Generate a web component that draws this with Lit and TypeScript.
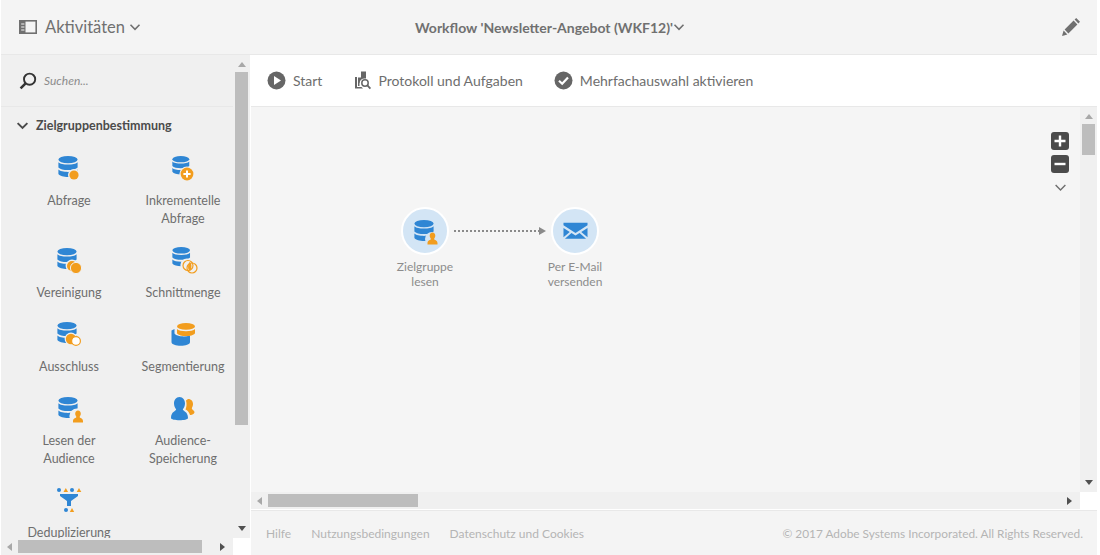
import { LitElement, html, css, svg } from "lit";
import { customElement } from "lit/decorators.js";

const BLUE = "#2f86d4";
const ORANGE = "#f29d1e";

// database cylinder, drawn at 20 wide and 21 high before scaling
const db = (x: number, y: number, s = 1, color = BLUE) => svg`
  <g transform="translate(${x} ${y}) scale(${s})" fill=${color}>
    <ellipse cx="10" cy="3.6" rx="9.6" ry="3.6" />
    <path d="M.4 6.2C3 9.4 17 9.4 19.6 6.2V11.4C17 14.8 3 14.8 .4 11.4Z" />
    <path d="M.4 13.6C3 16.8 17 16.8 19.6 13.6V18C17 22 3 22 .4 18Z" />
  </g>`;

const person = (x: number, y: number, s = 1, color = ORANGE) => svg`
  <g transform="translate(${x} ${y}) scale(${s})" fill=${color}>
    <path d="M5 0C6.8 0 7.8 1.4 7.8 3.2C7.8 4.6 7 5.6 6.6 6.4C6.6 7.4 10 7.4 10 10.5V12H0V10.5C0 7.4 3.4 7.4 3.4 6.4C3 5.6 2.2 4.6 2.2 3.2C2.2 1.4 3.2 0 5 0Z" />
  </g>`;

const icons: Record<string, unknown> = {
  query: svg`${db(7, 6)}
    <circle cx="23" cy="25" r="6" fill="#f0f0f0" /><circle cx="23" cy="25" r="4.6" fill=${ORANGE} />`,
  incremental: svg`${db(7, 6, 0.88)}
    <circle cx="22" cy="24" r="7.6" fill="#f0f0f0" /><circle cx="22" cy="24" r="6.4" fill=${ORANGE} />
    <path d="M22 20.4V27.6M18.4 24H25.6" stroke="#fff" stroke-width="2" />`,
  union: svg`${db(6, 6)}
    <circle cx="21" cy="24" r="6.4" fill="#f0f0f0" /><circle cx="21" cy="24" r="5" fill=${ORANGE} />
    <circle cx="25" cy="26" r="5.6" fill=${ORANGE} stroke="#f0f0f0" stroke-width="1" />`,
  intersect: svg`${db(7, 5, 0.92)}
    <circle cx="22" cy="23" r="6.6" fill="#f0f0f0" />
    <circle cx="23" cy="23.5" r="5" fill="none" stroke=${ORANGE} stroke-width="1.2" />
    <circle cx="27" cy="26" r="5" fill="none" stroke=${ORANGE} stroke-width="1.2" />
    <path d="M24.5 20C27 21 27 26 25 28.8C22.5 28 22.5 23 24.5 20Z" fill=${ORANGE} />`,
  exclude: svg`${db(6, 6)}
    <circle cx="20" cy="23" r="6.4" fill="#f0f0f0" /><circle cx="20" cy="23" r="5.2" fill=${ORANGE} />
    <circle cx="25" cy="25" r="4.4" fill="#fff" stroke=${ORANGE} stroke-width="1.2" />`,
  segment: svg`
    <path d="M6.5 14.5L9.5 13V17.5C11 20 19 21.5 25 19.5V26C25 31 6.5 31 6.5 26Z" fill=${BLUE} />
    <ellipse cx="21" cy="10.4" rx="9" ry="3.4" fill=${ORANGE} />
    <path d="M12 13C14.5 16 27.5 16 30 13V17.2C27.5 21 14.5 21 12 17.2Z" fill=${ORANGE} />`,
  read: svg`${db(7, 7)}
    <circle cx="26" cy="26" r="7.6" fill="#f0f0f0" />
    ${person(22, 20.5)}`,
  save: svg`
    <path d="M23 9C26.5 9 28 11.5 28 14C28 17 26.5 17.5 27 19C27.6 20 29.6 20.5 29.5 22.5C29 24.5 26 25 25 25C24 22 22.5 20.5 20.5 19.5C21.5 17 22 14 21 10.5Z" fill=${ORANGE} />
    <path d="M14.5 7C18 7 20 10 20 13.5C20 16 18.8 18 17.8 19.5C18 21 23 21.5 23 28C23 31 6 31 6 28C6 21.5 11 21 11.2 19.5C10.2 18 9 16 9 13.5C9 10 11 7 14.5 7Z" fill=${BLUE} />`,
  dedupe: svg`
    <circle cx="8" cy="8" r="2" fill=${BLUE} /><path d="M12.5 10L14.8 6L17.1 10Z" fill=${ORANGE} />
    <circle cx="21" cy="8" r="2" fill=${BLUE} /><path d="M25.7 10L28 6L30.3 10Z" fill=${ORANGE} />
    <path d="M9 12H27V14L20 19V24H16V19L9 14Z" fill=${BLUE} />
    <circle cx="15" cy="28" r="2" fill=${BLUE} /><path d="M18.8 30L21 26L23.2 30Z" fill=${ORANGE} />`,
};

const palette = [
  { icon: "query", label: ["Abfrage"] },
  { icon: "incremental", label: ["Inkrementelle", "Abfrage"] },
  { icon: "union", label: ["Vereinigung"] },
  { icon: "intersect", label: ["Schnittmenge"] },
  { icon: "exclude", label: ["Ausschluss"] },
  { icon: "segment", label: ["Segmentierung"] },
  { icon: "read", label: ["Lesen der", "Audience"] },
  { icon: "save", label: ["Audience-", "Speicherung"] },
  { icon: "dedupe", label: ["Deduplizierung"] },
];

const chevron = (size: number, color: string, sw = 1.6) => html`
  <svg width=${size} height=${size} viewBox="0 0 12 12">
    <path d="M1.5 3.8L6 8.3L10.5 3.8" fill="none" stroke=${color} stroke-width=${sw} />
  </svg>`;

@customElement("app-root")
export class AppRoot extends LitElement {
  static styles = css`
    :host {
      display: block;
      width: 1100px;
      height: 555px;
      background: #fff;
      font-family: Lato, "Open Sans", sans-serif;
      color: #6e6e6e;
    }

    .shell {
      width: 1096px;
      height: 555px;
      margin-left: 1px;
      display: flex;
      flex-direction: column;
    }

    .header {
      height: 54px;
      flex: none;
      background: #f4f4f4;
      border-bottom: 1px solid #e8e8e8;
      display: flex;
      align-items: center;
    }

    .panel-toggle {
      display: flex;
      align-items: center;
      width: 396px;
      padding-left: 18px;
      box-sizing: border-box;
      gap: 8px;
      font-size: 16.5px;
      color: #707070;
    }

    .panel-toggle svg:last-child {
      margin-left: -4px;
    }

    .title {
      flex: 1;
      display: flex;
      align-items: center;
      margin-left: 18px;
      font-size: 14px;
      font-weight: 700;
      color: #707070;
    }

    .edit {
      margin-right: 16px;
      display: flex;
    }

    .body {
      flex: 1;
      min-height: 0;
      display: flex;
    }

    .sidebar {
      width: 249px;
      flex: none;
      background: #f0f0f0;
      display: grid;
      grid-template-columns: 232px 17px;
      grid-template-rows: 1fr 17px;
      margin-right: 1px;
    }

    .side-content {
      overflow: hidden;
      min-height: 0;
    }

    .search {
      height: 51px;
      border-bottom: 1px solid #e8e8e8;
      display: flex;
      align-items: center;
      padding-left: 18px;
      gap: 7px;
      font-size: 12px;
      font-style: italic;
      color: #8c8c8c;
    }

    .section {
      display: flex;
      align-items: center;
      height: 37px;
      padding-left: 15px;
      gap: 7px;
      font-size: 12.5px;
      font-weight: 700;
      color: #4b4b4b;
    }

    .grid {
      display: grid;
      grid-template-columns: 114px 114px;
      padding-left: 11px;
      margin-top: 6px;
      row-gap: 14px;
    }

    .item {
      display: flex;
      flex-direction: column;
      align-items: center;
      font-size: 12.5px;
      line-height: 18px;
      color: #6e6e6e;
      white-space: nowrap;
    }

    .item svg {
      margin-bottom: 6px;
    }

    .vbar,
    .hbar {
      background: #f0f0f0;
      display: flex;
      align-items: center;
    }

    .vbar {
      flex-direction: column;
      padding: 0 2px;
      box-sizing: border-box;
    }

    .hbar {
      padding: 2px 0;
      box-sizing: border-box;
    }

    .thumb {
      background: #bdbdbd;
      flex: none;
    }

    .vbar .thumb {
      width: 13px;
    }

    .hbar .thumb {
      height: 13px;
    }

    .spacer {
      flex: 1;
    }

    .arrow {
      flex: none;
      width: 0;
      height: 0;
      border: 4px solid transparent;
    }

    .up {
      border-top: 0;
      border-bottom: 5px solid #a8a8a8;
      margin: 7px 0 5px;
    }

    .down {
      border-bottom: 0;
      border-top: 5px solid #505050;
      margin: 0 0 7px;
    }

    .left {
      border-left: 0;
      border-right: 5px solid #a8a8a8;
      margin: 0 6px;
    }

    .right {
      border-right: 0;
      border-left: 5px solid #505050;
      margin: 0 8px 0 0;
    }

    .corner {
      background: #fff;
    }

    .main {
      flex: 1;
      min-width: 0;
      display: flex;
      flex-direction: column;
    }

    .toolbar {
      height: 51px;
      flex: none;
      background: #fff;
      border-bottom: 1px solid #e8e8e8;
      display: flex;
      align-items: center;
      padding-left: 16px;
      font-size: 14px;
      color: #6e6e6e;
    }

    .tool {
      display: flex;
      align-items: center;
      gap: 7px;
      margin-right: 31px;
    }

    .tool.log {
      gap: 6px;
    }

    .workspace {
      flex: 1;
      min-height: 0;
      display: grid;
      grid-template-columns: 1fr 17px;
      grid-template-rows: 1fr 17px;
    }

    .canvas {
      position: relative;
      background: #f5f5f5;
      overflow: hidden;
    }

    .node {
      position: absolute;
      top: 100px;
      width: 80px;
      display: flex;
      flex-direction: column;
      align-items: center;
      font-size: 12px;
      line-height: 15px;
      color: #8c8c8c;
      text-align: center;
    }

    .bubble {
      width: 44px;
      height: 44px;
      border: 2px solid #fff;
      border-radius: 50%;
      background: #d3e5f5;
      display: flex;
      align-items: center;
      justify-content: center;
      margin-bottom: 4px;
    }

    .link {
      position: absolute;
      left: 203px;
      top: 119px;
    }

    .zoom {
      position: absolute;
      left: 800px;
      top: 25px;
      display: flex;
      flex-direction: column;
      align-items: center;
      gap: 5px;
    }

    .zoom-btn {
      width: 18px;
      height: 18px;
      border-radius: 3px;
      background: #4b4b4b;
      display: flex;
    }

    .zoom .chev {
      margin-top: 3px;
      display: flex;
    }

    .footer {
      height: 45px;
      flex: none;
      margin-top: 1px;
      box-sizing: border-box;
      background: #f4f4f4;
      border-top: 1px solid #e8e8e8;
      display: flex;
      align-items: center;
      padding: 0 14px 0 15px;
      gap: 20px;
      font-size: 12px;
      color: #b4b4b4;
    }

    .copy {
      margin-left: auto;
      font-size: 11.85px;
    }
  `;

  renderItem(item: { icon: string; label: string[] }) {
    return html`
      <div class="item">
        <svg width="36" height="36" viewBox="0 0 36 36">${icons[item.icon]}</svg>
        ${item.label.map((line) => html`<span>${line}</span>`)}
      </div>
    `;
  }

  render() {
    return html`
      <div class="shell">
        <div class="header">
          <div class="panel-toggle">
            <svg width="18" height="14" viewBox="0 0 18 14">
              <rect x=".8" y=".8" width="16.4" height="12.4" fill="none" stroke="#707070" stroke-width="1.6" />
              <rect x="1" y="1" width="5.5" height="12" fill="#707070" />
              <path d="M2.2 4H5.4M2.2 7H5.4M2.2 10H5.4" stroke="#f4f4f4" stroke-width="1" />
            </svg>
            <span>Aktivitäten</span>
            ${chevron(12, "#707070")}
          </div>
          <div class="title">
            <span>Workflow 'Newsletter-Angebot (WKF12)'</span>
            ${chevron(12, "#707070")}
          </div>
          <div class="edit">
            <svg width="20" height="20" viewBox="0 0 20 20">
              <path d="M1 19L2.6 13.6L6.4 17.4Z M3.6 12.6L12.6 3.6L16.4 7.4L7.4 16.4Z M13.6 2.6L15.2 1L19 4.8L17.4 6.4Z" fill="#707070" />
            </svg>
          </div>
        </div>

        <div class="body">
          <div class="sidebar">
            <div class="side-content">
              <div class="search">
                <svg width="18" height="18" viewBox="0 0 18 18">
                  <circle cx="10.6" cy="7.2" r="5.6" fill="none" stroke="#333" stroke-width="1.9" />
                  <path d="M6.6 11.4L1.6 16.4" stroke="#333" stroke-width="2.6" />
                </svg>
                <span>Suchen...</span>
              </div>
              <div class="section">
                ${chevron(13, "#4b4b4b", 1.8)}
                <span>Zielgruppenbestimmung</span>
              </div>
              <div class="grid">${palette.map((item) => this.renderItem(item))}</div>
            </div>
            <div class="vbar">
              <div class="arrow up"></div>
              <div class="thumb" style="height: 353px"></div>
              <div class="spacer"></div>
              <div class="arrow down"></div>
            </div>
            <div class="hbar">
              <div class="arrow left"></div>
              <div class="thumb" style="width: 184px"></div>
              <div class="spacer"></div>
              <div class="arrow right"></div>
            </div>
            <div class="corner"></div>
          </div>

          <div class="main">
            <div class="toolbar">
              <div class="tool">
                <svg width="19" height="19" viewBox="0 0 19 19">
                  <circle cx="9.5" cy="9.5" r="9" fill="#666" />
                  <path d="M7 5L14 9.5L7 14Z" fill="#fff" />
                </svg>
                <span>Start</span>
              </div>
              <div class="tool log">
                <svg width="19" height="19" viewBox="0 0 19 19">
                  <path d="M8 .5H13V7.5C9 7 6.8 9 6.5 12H5V6.5H8ZM2 6H4V16H8.5L10 17.5H2Z" fill="#666" />
                  <path d="M5 9H6.5V15H5Z" fill="#666" />
                  <circle cx="12" cy="12" r="3.2" fill="none" stroke="#666" stroke-width="1.5" />
                  <path d="M14.4 14.4L17.4 17.6" stroke="#666" stroke-width="1.8" />
                </svg>
                <span>Protokoll und Aufgaben</span>
              </div>
              <div class="tool">
                <svg width="19" height="19" viewBox="0 0 19 19">
                  <circle cx="9.5" cy="9.5" r="9" fill="#666" />
                  <path d="M5 9.8L8.2 12.8L14 6.6" fill="none" stroke="#fff" stroke-width="2.2" />
                </svg>
                <span>Mehrfachauswahl aktivieren</span>
              </div>
            </div>

            <div class="workspace">
              <div class="canvas">
                <svg class="link" width="100" height="12" viewBox="0 0 100 12">
                  <path d="M0 5H85" stroke="#8a8a8a" stroke-width="2" stroke-dasharray="2 2" />
                  <path d="M85 1L92 5L85 9Z" fill="#8a8a8a" />
                </svg>
                <div class="node" style="left: 134px">
                  <div class="bubble">
                    <svg width="28" height="28" viewBox="0 0 28 28">
                      ${db(3, 3)}
                      <circle cx="21" cy="22" r="7" fill="#d3e5f5" />
                      ${person(16.5, 15.5)}
                    </svg>
                  </div>
                  <span>Zielgruppe<br />lesen</span>
                </div>
                <div class="node" style="left: 284px">
                  <div class="bubble">
                    <svg width="25" height="18" viewBox="0 0 26 18">
                      <path d="M.5 .5H25.5V3L13 11L.5 3Z M.5 6L7 10L.5 15.5Z M25.5 6L19 10L25.5 15.5Z M2 17L8.8 11.2L13 13.8L17.2 11.2L24 17Z" fill=${BLUE} />
                    </svg>
                  </div>
                  <span>Per E-Mail<br />versenden</span>
                </div>
                <div class="zoom">
                  <div class="zoom-btn">
                    <svg width="18" height="18" viewBox="0 0 18 18">
                      <path d="M9 3.5V14.5M3.5 9H14.5" stroke="#fff" stroke-width="2.4" />
                    </svg>
                  </div>
                  <div class="zoom-btn">
                    <svg width="18" height="18" viewBox="0 0 18 18">
                      <path d="M3.5 9H14.5" stroke="#fff" stroke-width="2.4" />
                    </svg>
                  </div>
                  <div class="chev">${chevron(13, "#6e6e6e", 1.3)}</div>
                </div>
              </div>
              <div class="vbar">
                <div class="arrow up"></div>
                <div class="thumb" style="height: 31px"></div>
                <div class="spacer"></div>
                <div class="arrow down"></div>
              </div>
              <div class="hbar">
                <div class="arrow left"></div>
                <div class="thumb" style="width: 150px"></div>
                <div class="spacer"></div>
                <div class="arrow right"></div>
              </div>
              <div class="corner"></div>
            </div>

            <div class="footer">
              <span>Hilfe</span>
              <span>Nutzungsbedingungen</span>
              <span>Datenschutz und Cookies</span>
              <span class="copy">© 2017 Adobe Systems Incorporated. All Rights Reserved.</span>
            </div>
          </div>
        </div>
      </div>
    `;
  }
}
